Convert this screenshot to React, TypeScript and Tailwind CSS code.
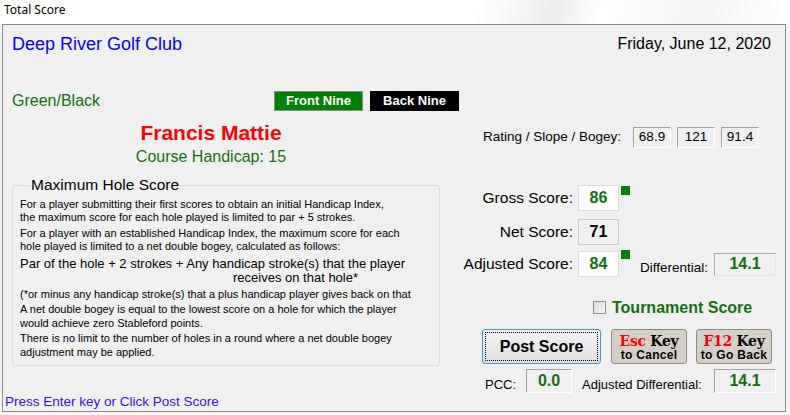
import { FC, ReactElement } from 'react';

const green = 'text-[#107010]';

const ScoreBox: FC<{ value: string; white?: boolean }> = ({ value, white }): ReactElement => (
  <div
    className={`w-[41px] h-[26px] flex items-center justify-center border text-[16px] font-bold ${
      white ? `bg-white border-[#dcdcdc] ${green}` : 'bg-[#f0f0f0] border-[#c8c8c8] text-black'
    }`}
  >
    {value}
  </div>
);

const SunkenBox: FC<{ value: string; w: string }> = ({ value, w }): ReactElement => (
  <div
    className={`${w} h-[24px] flex justify-center pt-[2px] border border-t-[#a0a0a0] border-l-[#a0a0a0] border-b-white border-r-white text-[16px] font-bold leading-[18px] ${green}`}
  >
    {value}
  </div>
);

const KeyButton: FC<{ keyName: string; caption: string }> = ({ keyName, caption }): ReactElement => (
  <button
    type="button"
    className="w-[76px] h-[35px] bg-[#d4d0c8] border border-[#8a8a8a] rounded-[3px] flex flex-col items-center pt-[4px]"
  >
    <div className="font-['DejaVu_Serif',serif] font-bold text-[14px] leading-[15px] tracking-[-0.3px] whitespace-nowrap">
      <span className="text-[#ff0000]">{keyName}</span> Key
    </div>
    <div className="text-[12px] font-bold leading-[13px] tracking-[0.3px] whitespace-nowrap">{caption}</div>
  </button>
);

const App: FC = (): ReactElement => {
  return (
    <div className="w-[790px] h-[415px] overflow-hidden bg-[#f4f4f4] font-['Liberation_Sans',Arial,sans-serif] text-black">
      <div className="h-[24px] pl-[4px] pt-[2px] text-[12px] leading-[16px] font-['Noto_Sans',sans-serif] bg-[linear-gradient(105deg,#ffffff_0%,#ffffff_60%,#ececec_70%,#ffffff_76%,#f3f3f3_88%,#ffffff_100%)]">
        Total Score
      </div>

      <div className="ml-[2px] w-[784px] h-[388px] border border-[#8c8c8c] bg-[#f0f0f0] flex flex-col">
        {/* header */}
        <div className="mt-[9px] h-[20px] pl-[9px] pr-[14px] flex items-center justify-between">
          <span className="text-[18px] text-[#0000ff]">Deep River Golf Club</span>
          <span className="text-[16px]">Friday, June 12, 2020</span>
        </div>

        {/* tee + nine buttons */}
        <div className="mt-[37px] h-[20px] pl-[9px] flex items-center">
          <span className={`w-[262px] text-[16px] ${green}`}>Green/Black</span>
          <div className="w-[89px] h-[20px] bg-[#008000] border border-[#8a8a8a] text-white text-[13px] font-bold flex items-center justify-center">
            Front Nine
          </div>
          <div className="ml-[7px] w-[89px] h-[20px] bg-black text-white text-[13px] font-bold flex items-center justify-center">
            Back Nine
          </div>
        </div>

        <div className="flex">
          {/* left column */}
          <div className="pl-[9px] w-[437px]">
            <div className="mt-[10px] w-[398px] text-center text-[21px] leading-[24px] font-bold text-[#ff0000]">
              Francis Mattie
            </div>
            <div className={`mt-[3px] w-[398px] text-center text-[16px] leading-[18px] ${green}`}>
              Course Handicap: 15
            </div>
            <fieldset className="mt-[10px] h-[190px] border border-[#d9dde0] rounded-[3px] pl-[7px] pr-[4px]">
              <legend className="ml-[10px] px-[1px] text-[15.5px] leading-[18px]">Maximum Hole Score</legend>
              <div className="pt-[4px] text-[11px] leading-[13px]">
                <p>
                  For a player submitting their first scores to obtain an initial Handicap Index,
                  <br />
                  the maximum score for each hole played is limited to par + 5 strokes.
                </p>
                <p className="mt-[3px]">
                  For a player with an established Handicap Index, the maximum score for each
                  <br />
                  hole played is limited to a net double bogey, calculated as follows:
                </p>
                <p className="mt-[4px] text-[13px] leading-[14px]">
                  Par of the hole + 2 strokes + Any handicap stroke(s) that the player
                  <br />
                  <span className="pl-[213px]">receives on that hole*</span>
                </p>
                <p className="mt-[3px] whitespace-nowrap">
                  (*or minus any handicap stroke(s) that a plus handicap player gives back on that
                </p>
                <p className="mt-[2px] leading-[13.5px]">
                  A net double bogey is equal to the lowest score on a hole for which the player
                  <br />
                  would achieve zero Stableford points.
                </p>
                <p className="mt-[2px] leading-[13.5px]">
                  There is no limit to the number of holes in a round where a net double bogey
                  <br />
                  adjustment may be applied.
                </p>
              </div>
            </fieldset>
          </div>

          {/* right column */}
          <div className="flex-1">
            <div className="mt-[16px] pl-[43px] h-[21px] flex items-center">
              <span className="w-[150px] text-[13.5px]">Rating / Slope / Bogey:</span>
              <div className="flex gap-[6px] text-[13.5px]">
                {['68.9', '121', '91.4'].map((v) => (
                  <div
                    key={v}
                    className="w-[38px] h-[21px] flex items-center justify-center border border-t-[#a0a0a0] border-l-[#a0a0a0] border-b-white border-r-white"
                  >
                    {v}
                  </div>
                ))}
              </div>
            </div>

            <div className="mt-[37px] flex items-center">
              <span className="w-[133px] text-right text-[15.5px]">Gross Score:</span>
              <div className="ml-[5px]">
                <ScoreBox value="86" white />
              </div>
              <div className="ml-[2px] self-start mt-[1px] w-[9px] h-[9px] bg-[#008000]" />
            </div>

            <div className="mt-[8px] flex items-center">
              <span className="w-[133px] text-right text-[15.5px]">Net Score:</span>
              <div className="ml-[5px]">
                <ScoreBox value="71" />
              </div>
            </div>

            <div className="mt-[6px] flex items-center">
              <span className="w-[133px] text-right text-[15.5px]">Adjusted Score:</span>
              <div className="ml-[5px]">
                <ScoreBox value="84" white />
              </div>
              <div className="ml-[2px] self-start mt-[-1px] w-[9px] h-[9px] bg-[#008000]" />
              <div className="ml-[10px] flex items-end">
                <span className="w-[74px] text-[13.5px] leading-[15px] pb-[1px]">Differential:</span>
                <div className="w-[62px] h-[23px] flex items-center justify-center border border-[#a8a8a8] border-b-[#e4e4e4] border-r-[#e4e4e4] text-[16px] font-bold text-[#107010]">
                  14.1
                </div>
              </div>
            </div>

            <div className="mt-[21px] h-[19px] pl-[153px] flex items-center gap-[6px]">
              <div className="w-[13px] h-[13px] border border-[#8f8f8f] bg-[linear-gradient(135deg,#dcdcdc,#f8f8f8)]" />
              <span className={`text-[16px] font-bold ${green}`}>Tournament Score</span>
            </div>

            <div className="mt-[12px] pl-[42px] flex">
              <button
                type="button"
                className="w-[119px] h-[35px] rounded-[3px] border border-[#3c9ad8] bg-[linear-gradient(#f4f4f4,#dedede)] p-[2px]"
              >
                <div className="w-full h-full border border-dotted border-black flex items-center justify-center text-[16px] font-bold">
                  Post Score
                </div>
              </button>
              <div className="ml-[10px]">
                <KeyButton keyName="Esc" caption="to Cancel" />
              </div>
              <div className="ml-[9px]">
                <KeyButton keyName="F12" caption="to Go Back" />
              </div>
            </div>

            <div className="mt-[5px] pl-[45px] flex items-end">
              <span className="w-[41px] text-[13px] leading-[15px] pb-[1px]">PCC:</span>
              <SunkenBox value="0.0" w="w-[46px]" />
              <span className="ml-[10px] w-[132px] text-[13px] leading-[15px] pb-[1px]">Adjusted Differential:</span>
              <SunkenBox value="14.1" w="w-[62px]" />
            </div>
          </div>
        </div>

        <div className="mt-auto mb-[1px] pl-[2px] text-[13.5px] leading-[16px] text-[#3010ff]">
          Press Enter key or Click Post Score
        </div>
      </div>
    </div>
  );
};

export default App;
